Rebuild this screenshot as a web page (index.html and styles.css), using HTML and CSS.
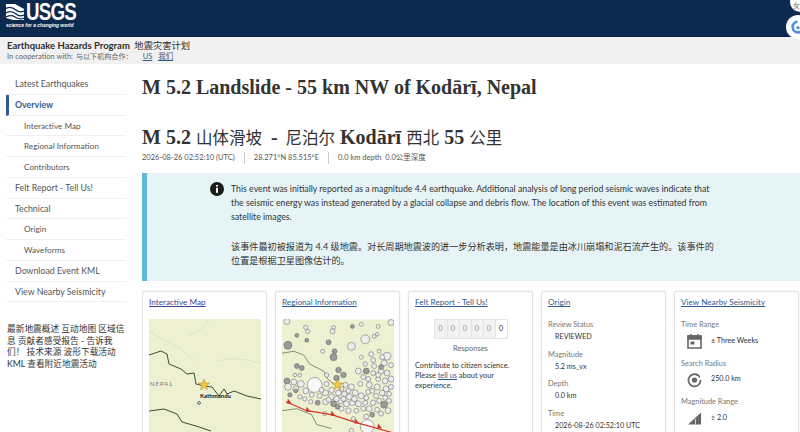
FILE: index.html
```html
<!DOCTYPE html>
<html lang="en">
<head>
  <meta charset="UTF-8" />
  <title>M 5.2 Landslide - 55 km NW of Kodārī, Nepal</title>
  <link rel="stylesheet" href="styles.css">
</head>
<body>

  <header class="site-header">
    <a class="logo" href="#">
      <span class="logo-top">
        <svg class="logo-waves" viewBox="0 0 18 16">
          <rect width="18" height="16" fill="#fff"/>
          <path d="M0 4.500c4-2.500 7-1 10 1.500s5 2.500 8 1M0 9c4-2.500 7-1.500 10 1s5 2.500 8 1M0 13c4-2 7-1.500 9 0s6 2.500 9 1" fill="none" stroke="#0c2a4e" stroke-width="1.300"/>
          <path d="M9 0l9 5V0zM0 16h7L0 14z" fill="#0c2a4e"/>
        </svg>
        <span class="logo-word">USGS</span>
      </span>
      <span class="logo-tag">science for a changing world</span>
    </a>
  </header>
  <div class="float-btn float-top">女</div>
  <div class="float-btn float-main">
    <svg viewBox="0 0 24 24"><circle cx="12" cy="12" r="8" fill="none" stroke="#4a8fe0" stroke-width="4" stroke-dasharray="36 14"/><circle cx="12" cy="13" r="2.500" fill="#4a8fe0"/></svg>
  </div>

  <div class="program-bar">
    <div class="program-name"><strong>Earthquake Hazards Program</strong> <span class="program-zh">地震灾害计划</span></div>
    <div class="program-coop">In cooperation with: <span class="coop-zh">与以下机构合作：</span><a href="#">US</a> <a class="coop-us" href="#">我们</a></div>
  </div>

  <div class="page">
    <aside class="sidebar">
      <nav class="side-nav">
        <a href="#">Latest Earthquakes</a>
        <a href="#" class="active">Overview</a>
        <a href="#" class="sub">Interactive Map</a>
        <a href="#" class="sub">Regional Information</a>
        <a href="#" class="sub">Contributors</a>
        <a href="#">Felt Report - Tell Us!</a>
        <a href="#">Technical</a>
        <a href="#" class="sub">Origin</a>
        <a href="#" class="sub">Waveforms</a>
        <a href="#">Download Event KML</a>
        <a href="#">View Nearby Seismicity</a>
      </nav>
      <p class="side-zh">最新地震概述 互动地图 区域信息 贡献者感受报告 - 告诉我们！ 技术来源 波形下载活动 KML 查看附近地震活动</p>
    </aside>

    <main class="content">
      <h1>M 5.2 Landslide - 55 km NW of Kodārī, Nepal</h1>
      <h1 class="title-zh">M 5.2 <span class="zh">山体滑坡</span> <span class="dash">-</span> <span class="zh">尼泊尔</span> Kodārī <span class="zh">西北</span> 55 <span class="zh">公里</span></h1>
      <ul class="meta">
        <li>2026-08-26 02:52:10 (UTC)</li>
        <li>28.271°N 85.515°E</li>
        <li>0.0 km depth &nbsp;0.0公里深度</li>
      </ul>

      <section class="alert">
        <svg class="alert-icon" viewBox="0 0 14 14">
          <circle cx="7" cy="7" r="7" fill="#1b1b1b"/>
          <circle cx="7" cy="3.800" r="1.100" fill="#fff"/>
          <rect x="6" y="5.800" width="2" height="5" fill="#fff"/>
        </svg>
        <div class="alert-text">
          <p>This event was initially reported as a magnitude 4.4 earthquake. Additional analysis of long period seismic waves indicate that<br>the seismic energy was instead generated by a glacial collapse and debris flow. The location of this event was estimated from<br>satellite images.</p>
          <p class="alert-zh">该事件最初被报道为 4.4 级地震。对长周期地震波的进一步分析表明，地震能量是由冰川崩塌和泥石流产生的。该事件的<br>位置是根据卫星图像估计的。</p>
        </div>
      </section>

      <div class="cards">
        <article class="card">
          <a class="card-title visited" href="#">Interactive Map</a>
          <svg class="card-map" viewBox="0 0 112 116">
            <rect width="112" height="116" fill="#eef0d2"/>
            <path d="M0 12C15 22 30 25 45 42M60 0C55 10 50 12 40 16M70 42c15-4 25-2 42 2" fill="none" stroke="#d6dcc0" stroke-width=".7"/>
            <path d="M0 36L12 32 18 35 20 45 32 50 38 55 45 54 47 65 55 67 63 68 70 77 75 70 78 75 85 72 98 77 112 80" fill="none" stroke="#3f4a3a" stroke-width="1"/>
            <path d="M0 92L15 90 28 95 33 103 47 107 62 112" fill="none" stroke="#3f4a3a" stroke-width="1"/>
            <text class="map-country" x="1" y="67">NEPAL</text>
            <text class="map-city" x="51" y="79">Kathmandu</text>
            <circle cx="50" cy="84" r="1.400" fill="#fff" stroke="#222" stroke-width=".7"/>
            <path d="M55 60l1.400 4 4.300.1-3.400 2.600 1.200 4.100L55 68.400l-3.500 2.400 1.200-4.100-3.400-2.600 4.300-.1z" fill="#f3c742" stroke="#a98a2e" stroke-width=".5"/>
          </svg>
        </article>

        <article class="card">
          <a class="card-title" href="#">Regional Information</a>
          <svg class="card-map" viewBox="0 0 113 116">
            <rect width="113" height="116" fill="#eef0d2"/>
            <path d="M0 34L12 32 22 36 28 45 42 52 46 60 56 68M0 92L15 90 30 96 35 106 50 110" fill="none" stroke="#6a7460" stroke-width=".8"/>
            <g class="eq">
              <circle cx="5" cy="2" r="3"/><circle cx="24" cy="8" r="2.200"/><circle cx="26" cy="12" r="2.200"/><circle cx="15" cy="16" r="2" class="dk"/>
              <circle cx="52" cy="8" r="2"/><circle cx="51" cy="12" r="2.500"/><circle cx="71" cy="7" r="2" class="dk"/><circle cx="80" cy="5" r="2"/>
              <circle cx="97" cy="7" r="2"/><circle cx="110" cy="3" r="3"/><circle cx="96" cy="15" r="1.800"/><circle cx="93" cy="17" r="2"/>
              <circle cx="84" cy="20" r="4.500"/><circle cx="25" cy="21" r="2" class="dk"/><circle cx="47" cy="23" r="2.500" class="dk"/><circle cx="6" cy="26" r="4" class="dk"/>
              <circle cx="70" cy="27" r="4"/><circle cx="41" cy="32" r="2"/><circle cx="53" cy="32" r="2.500" class="dk"/><circle cx="52" cy="38" r="3.500" class="dk"/>
              <circle cx="80" cy="38" r="2"/><circle cx="98" cy="32" r="2"/><circle cx="106" cy="37" r="4"/><circle cx="92" cy="41" r="2.500"/>
              <circle cx="84" cy="45" r="2.200"/><circle cx="93" cy="47" r="2.500"/><circle cx="103" cy="44" r="3"/><circle cx="110" cy="46" r="2.500"/>
              <circle cx="15" cy="47" r="2.500" class="dk"/><circle cx="20" cy="49" r="2.500" class="dk"/><circle cx="13" cy="56" r="1.800"/><circle cx="18" cy="56" r="1.800"/>
              <circle cx="57" cy="51" r="2.800" class="dk"/><circle cx="62" cy="56" r="2.800" class="dk"/><circle cx="55" cy="59" r="2.800" class="dk"/><circle cx="77" cy="52" r="3"/>
              <circle cx="85" cy="52" r="3" class="dk"/><circle cx="92" cy="54" r="2.500"/><circle cx="100" cy="52" r="3"/><circle cx="106" cy="54" r="3"/>
              <circle cx="45" cy="56" r="2.200"/><circle cx="87" cy="60" r="2.500"/><circle cx="97" cy="60" r="2.500"/><circle cx="104" cy="62" r="3"/><circle cx="110" cy="60" r="3"/>
              <circle cx="33" cy="66" r="7.500" class="lt"/><circle cx="5" cy="62" r="3" class="dk"/><circle cx="12" cy="63" r="3"/><circle cx="19" cy="65" r="3.500"/>
              <circle cx="6" cy="68" r="3.500"/><circle cx="14" cy="70" r="3"/><circle cx="24" cy="72" r="3"/><circle cx="45" cy="65" r="2.500"/>
              <circle cx="64" cy="66" r="2.500"/><circle cx="70" cy="68" r="3"/><circle cx="79" cy="65" r="2.500"/><circle cx="88" cy="66" r="3"/>
              <circle cx="96" cy="68" r="3"/><circle cx="105" cy="70" r="3"/><circle cx="110" cy="68" r="2.500"/><circle cx="30" cy="76" r="2.500"/>
              <circle cx="38" cy="77" r="2.500"/><circle cx="44" cy="74" r="3"/><circle cx="50" cy="78" r="3"/><circle cx="57" cy="74" r="3"/>
              <circle cx="63" cy="75" r="2.800"/><circle cx="68" cy="78" r="3"/><circle cx="74" cy="74" r="3"/><circle cx="80" cy="77" r="3"/>
              <circle cx="87" cy="73" r="2.500"/><circle cx="95" cy="77" r="2.500"/><circle cx="104" cy="79" r="2.500"/><circle cx="36" cy="84" r="2.500" class="dk"/>
              <circle cx="44" cy="83" r="3"/><circle cx="52" cy="85" r="3" class="dk"/><circle cx="59" cy="82" r="3"/><circle cx="65" cy="85" r="3"/>
              <circle cx="71" cy="84" r="2.800"/><circle cx="77" cy="85" r="3"/><circle cx="84" cy="84" r="2.500"/><circle cx="103" cy="86" r="3.500" class="dk"/>
              <circle cx="60" cy="90" r="2.500"/><circle cx="67" cy="92" r="2.800"/><circle cx="75" cy="92" r="2.500"/><circle cx="88" cy="90" r="3"/>
              <circle cx="96" cy="91" r="2.500"/><circle cx="43" cy="95" r="2"/><circle cx="85" cy="98" r="2.500"/><circle cx="91" cy="96" r="2.500" class="dk"/>
              <circle cx="72" cy="100" r="2"/><circle cx="86" cy="108" r="7" class="lt"/><circle cx="70" cy="112" r="2.200"/><circle cx="14" cy="72" r="2" class="dk"/>
              <circle cx="40" cy="71" r="2.500"/><circle cx="50" cy="71" r="2.800"/><circle cx="60" cy="70" r="2.500"/><circle cx="67" cy="72" r="2.500"/>
              <circle cx="47" cy="81" r="2.500"/><circle cx="55" cy="80" r="2.800"/><circle cx="62" cy="80" r="2.500"/><circle cx="73" cy="80" r="2.800"/>
              <circle cx="85" cy="79" r="2.500"/><circle cx="91" cy="72" r="2.500"/><circle cx="101" cy="74" r="2.800"/><circle cx="108" cy="75" r="2.500"/>
              <circle cx="92" cy="84" r="2.800"/><circle cx="98" cy="82" r="2.500"/><circle cx="108" cy="82" r="2.500"/><circle cx="56" cy="88" r="2.500" class="dk"/>
              <circle cx="82" cy="90" r="2.500"/><circle cx="100" cy="95" r="2.500"/><circle cx="107" cy="92" r="3"/><circle cx="100" cy="48" r="2.500" class="dk"/>
              <circle cx="90" cy="35" r="2.500"/><circle cx="101" cy="38" r="2.500"/><circle cx="97" cy="56" r="2.500"/><circle cx="82" cy="58" r="2.500"/>
              <circle cx="29" cy="83" r="2.200"/><circle cx="23" cy="80" r="2.200"/><circle cx="8" cy="76" r="2.200" class="dk"/><circle cx="18" cy="78" r="2.200"/>
            </g>
            <path d="M4 83L25 92 50 96 75 104 111 114" fill="none" stroke="#d8352a" stroke-width="1.200"/>
            <path d="M6 80l4 5-5 0zM25 88l4 5-5 0zM50 92l4 5-5 0zM74 100l4 5-5 0zM97 105l4 5-5 0z" fill="#d8352a"/>
            <path d="M56 60l1.400 4 4.300.1-3.400 2.600 1.200 4.100L56 68.400l-3.500 2.400 1.200-4.100-3.400-2.600 4.300-.1z" fill="#f3c742" stroke="#a98a2e" stroke-width=".5"/>
          </svg>
        </article>

        <article class="card">
          <a class="card-title" href="#">Felt Report - Tell Us!</a>
          <div class="counter">
            <span>0</span><span>0</span><span>0</span><span>0</span><span>0</span><span class="current">0</span>
          </div>
          <div class="counter-label">Responses</div>
          <p class="card-text">Contribute to citizen science.<br>Please <a href="#">tell us</a> about your<br>experience.</p>
        </article>

        <article class="card">
          <a class="card-title" href="#">Origin</a>
          <dl class="facts">
            <dt>Review Status</dt><dd>REVIEWED</dd>
            <dt>Magnitude</dt><dd>5.2 ms_vx</dd>
            <dt>Depth</dt><dd>0.0 km</dd>
            <dt>Time</dt><dd>2026-08-26 02:52:10 UTC</dd>
          </dl>
        </article>

        <article class="card">
          <a class="card-title" href="#">View Nearby Seismicity</a>
          <dl class="facts facts-icons">
            <dt>Time Range</dt>
            <dd>
              <svg viewBox="0 0 15 16"><path d="M1 3h13v12H1z" fill="none" stroke="#666" stroke-width="1.600"/><path d="M1 3h13v3H1zM4 1v3M11 1v3" stroke="#666" stroke-width="1.400" fill="#666"/><rect x="3.500" y="8.500" width="4" height="3" fill="#666"/></svg>
              ± Three Weeks
            </dd>
            <dt>Search Radius</dt>
            <dd>
              <svg viewBox="0 0 16 16"><path d="M12 3.200A6.500 6.500 0 1 0 14.500 8" fill="none" stroke="#666" stroke-width="1.800"/><circle cx="8" cy="8" r="2.800" fill="#666"/><path d="M9 2.500a4 4 0 0 1 4.500 3" fill="none" stroke="#666" stroke-width="1.500"/></svg>
              250.0 km
            </dd>
            <dt>Magnitude Range</dt>
            <dd>
              <svg viewBox="0 0 16 16"><path d="M1 15L15 2v13z" fill="#666"/><path d="M9 15V9" stroke="#fff" stroke-width=".8"/></svg>
              ≥ 2.0
            </dd>
          </dl>
        </article>
      </div>
    </main>
  </div>

</body>
</html>
```

FILE: styles.css
```css
:root {
  --navy: #0c2a4e;
  --link: #2f5c8f;
  --text: #333;
  --muted: #6b6b6b;
  --sans: Lato, "Noto Sans CJK SC", sans-serif;
}

html, body {
  height: 432px;
  overflow: hidden;
}

body {
  margin: 0;
  font-family: var(--sans);
  font-size: 9px;
  color: var(--text);
  background: #fff;
}

a {
  color: var(--link);
}

/* top bars */
.site-header {
  background: var(--navy);
  height: 37px;
  padding: 3px 0 0 6px;
  box-sizing: border-box;
  border-bottom: 1px solid #08203c;
}

.logo {
  display: inline-flex;
  flex-direction: column;
  color: #fff;
  text-decoration: none;
}

.logo-top {
  display: flex;
  align-items: center;
  gap: 2px;
  height: 18px;
}

.logo-waves {
  width: 18px;
  height: 16px;
}

.logo-word {
  font-family: "Liberation Sans", sans-serif;
  font-weight: 700;
  font-size: 24px;
  line-height: 18px;
  letter-spacing: -1px;
  transform: scaleX(.78);
  transform-origin: left;
}

.logo-tag {
  margin-top: 2px;
  font-family: "Liberation Sans", sans-serif;
  font-style: italic;
  font-weight: 700;
  font-size: 4.900px;
  line-height: 6px;
  white-space: nowrap;
}

.float-btn {
  position: absolute;
  background: #fff;
  border-radius: 50%;
  display: flex;
  align-items: center;
  justify-content: center;
}

.float-top {
  left: 790px;
  top: -8px;
  width: 20px;
  height: 20px;
  font-size: 7px;
  color: #777;
  padding-top: 6px;
  box-sizing: border-box;
  justify-content: flex-start;
  padding-left: 3px;
}

.float-main {
  left: 786px;
  top: 15px;
  width: 24px;
  height: 24px;
  justify-content: flex-start;
  padding-left: 4px;
  box-sizing: border-box;
}

.float-main svg {
  width: 16px;
  height: 16px;
}

.program-bar {
  background: #f1f1f1;
  height: 27px;
  padding: 3px 7px 0;
  box-sizing: border-box;
  white-space: nowrap;
}

.program-name {
  font-size: 9.500px;
  line-height: 11px;
  color: #2e2e2e;
}

.program-zh {
  margin-left: 2px;
  font-size: 9.300px;
}

.program-coop {
  font-size: 7.500px;
  line-height: 12px;
  color: #666;
}

.coop-zh {
  margin: 0 10px 0 1px;
  font-size: 7.100px;
}

.coop-us {
  margin-left: 4px;
}

/* sidebar */
.page {
  display: flex;
}

.sidebar {
  width: 142px;
  flex: none;
  padding: 10px 0 0 6px;
  box-sizing: border-box;
}

.side-nav {
  width: 120px;
}

.side-nav a {
  display: block;
  height: 20.750px;
  line-height: 20px;
  box-sizing: border-box;
  padding-left: 9px;
  color: #555;
  text-decoration: none;
  font-size: 8.800px;
  border-bottom: 1px solid #f0f0f0;
}

.side-nav a.sub {
  padding-left: 18px;
  font-size: 8.200px;
}

.side-nav a.active {
  color: var(--link);
  font-weight: 700;
  border-left: 3px solid var(--link);
  padding-left: 6px;
}

.side-zh {
  margin: 21px 0 0 1px;
  width: 118px;
  font-size: 8.700px;
  line-height: 11.500px;
  color: #333;
}

/* main column */
.content {
  flex: 1;
  min-width: 0;
  overflow: hidden;
}

h1 {
  margin: 11px 0 0;
  font-family: "Liberation Serif", "Noto Sans CJK SC", serif;
  font-weight: 700;
  font-size: 20px;
  line-height: 25px;
  color: #333;
  white-space: nowrap;
}

.title-zh {
  margin-top: 25px;
}

.title-zh .zh {
  font-size: 16.500px;
  font-weight: 400;
}

.title-zh .dash {
  margin: 0 3px 0 4px;
}

.meta {
  display: flex;
  list-style: none;
  margin: 1px 0 0;
  padding: 0;
  font-size: 7.500px;
  line-height: 12px;
  color: #555;
}

.meta li + li {
  margin-left: 9px;
  padding-left: 9px;
  border-left: 1px solid #ccc;
}

.alert {
  display: flex;
  margin-top: 9px;
  height: 108px;
  box-sizing: border-box;
  padding: 9px 0 0 63px;
  background: #e6f4f7;
  border-left: 5px solid #5cbad6;
}

.alert-icon {
  width: 14px;
  height: 14px;
  flex: none;
  margin-right: 7px;
}

.alert-text {
  font-size: 8.750px;
  line-height: 14px;
  color: #333;
  white-space: nowrap;
}

.alert-text p {
  margin: 0 0 16px;
}

.alert-text .alert-zh {
  font-size: 9.150px;
}

.cards {
  display: grid;
  grid-template-columns: repeat(5, 125px);
  gap: 8px;
  margin-top: 10px;
}

.card {
  height: 160px;
  box-sizing: border-box;
  padding: 5px 6px;
  background: #fff;
  border: 1px solid #e2e2e2;
  border-radius: 3px;
  box-shadow: 0 0 2px rgba(0, 0, 0, .1);
}

.card-title {
  display: block;
  font-size: 8.200px;
  line-height: 11px;
  white-space: nowrap;
}

.card-title.visited {
  color: #3d3f8f;
}

.card-map {
  display: block;
  width: 112px;
  height: 116px;
  margin-top: 11px;
}

.map-country {
  font-size: 6px;
  letter-spacing: 1px;
  fill: #777;
}

.map-city {
  font-size: 6px;
  font-weight: 700;
  fill: #111;
}

.eq circle {
  fill: #ececec;
  stroke: #5a5a5a;
  stroke-width: .5;
}

.eq circle.dk {
  fill: #9b9b9b;
}

.eq circle.lt {
  fill: #f8f8f8;
}

.counter {
  display: flex;
  width: max-content;
  margin: 11px auto 0;
  border: 1px solid #e4e4e4;
  background: #f2f2f2;
}

.counter span {
  width: 12px;
  height: 18px;
  line-height: 18px;
  text-align: center;
  font-size: 7.500px;
  color: #999;
  border-left: 1px solid #e4e4e4;
  box-sizing: border-box;
}

.counter span:first-child {
  border-left: 0;
}

.counter .current {
  background: #fff;
  color: #333;
}

.counter-label {
  margin-top: 4px;
  text-align: center;
  font-size: 7.500px;
  line-height: 11px;
  color: #666;
}

.card-text {
  margin: 7px 0 0;
  font-size: 7.400px;
  line-height: 10px;
}

.facts {
  margin: 11px 0 0;
  font-size: 7.400px;
}

.facts dt {
  color: #777;
  line-height: 12px;
}

.facts dd {
  margin: 0 0 5px 7px;
  line-height: 12.500px;
  font-size: 7.200px;
  color: #333;
  white-space: nowrap;
}

.facts-icons dd {
  display: flex;
  align-items: center;
  gap: 9px;
  margin: 2px 0 8.500px 6px;
  height: 16px;
  font-weight: 400;
}

.facts-icons svg {
  width: 15px;
  height: 16px;
  flex: none;
}
```
